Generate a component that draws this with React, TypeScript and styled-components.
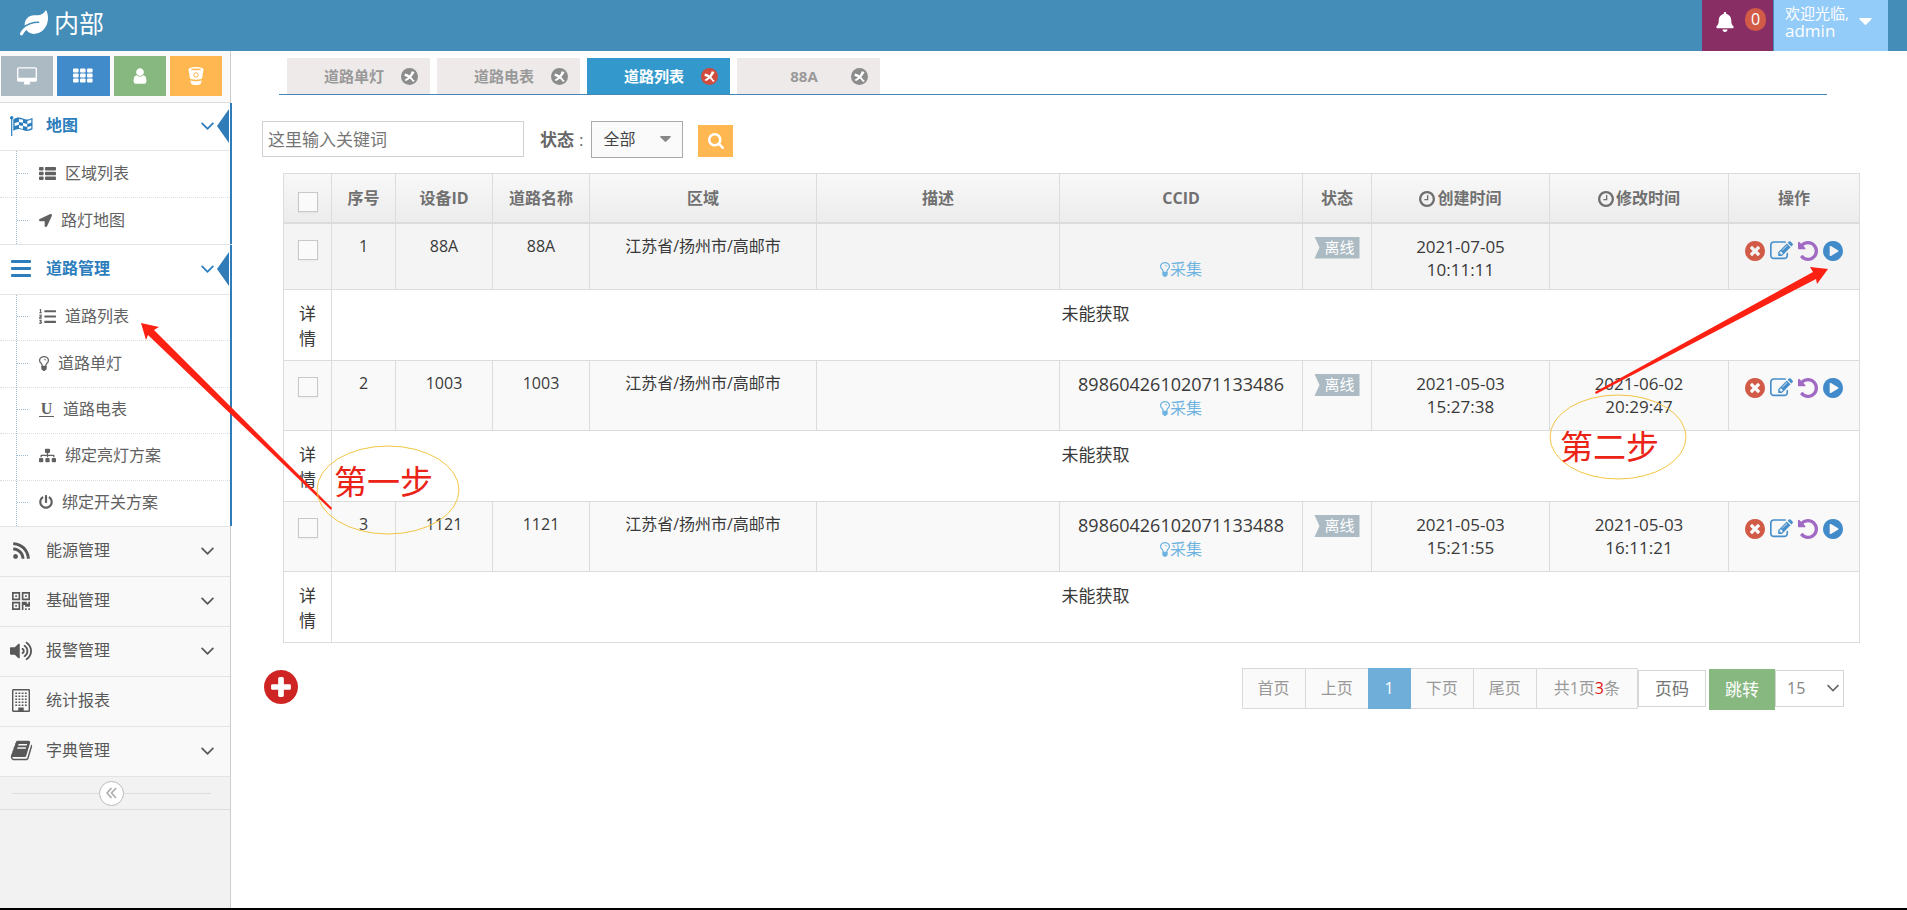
import React from "react";
import styled, { createGlobalStyle, css } from "styled-components";
import {
  FaLeaf,
  FaBell,
  FaLocationArrow,
  FaListOl,
  FaSitemap,
  FaPowerOff,
  FaRss,
  FaVolumeUp,
} from "react-icons/fa";

const GlobalStyle = createGlobalStyle`
  *, *::before, *::after { box-sizing: border-box; }
  body {
    margin: 0;
    background: #fff;
    color: #393939;
    font: 16px/23px "Open Sans", "Noto Sans CJK SC", sans-serif;
  }
  button, input, select { font: inherit; color: inherit; border-radius: 0; margin: 0; }
  button { border: 0; padding: 0; cursor: pointer; background: none; }
  a { color: inherit; text-decoration: none; }
  ul { list-style: none; margin: 0; padding: 0; }
  svg { display: block; flex: none; }
`;

/* ---------- icons ---------- */

type GlyphProps = { d: string; size: number; box?: string; width?: number };

const Glyph = ({ d, size, box = "0 0 1792 1792", width }: GlyphProps) => (
  <svg width={width ?? size} height={size} viewBox={box} fill="currentColor" aria-hidden="true">
    <path d={d} />
  </svg>
);

const RING =
  "q0 209-103 385.5t-279.5 279.5-385.5 103-385.5-103-279.5-279.5-103-385.5 103-385.5 279.5-279.5 385.5-103 385.5 103 279.5 279.5 103 385.5z";

const paths = {
  desktop:
    "M1792 992v-832q0-13-9.5-22.5t-22.5-9.5h-1600q-13 0-22.5 9.5t-9.5 22.5v832q0 13 9.5 22.5t22.5 9.5h1600q13 0 22.5-9.5t9.5-22.5zm128-832v1088q0 66-47 113t-113 47h-544q0 37 16 77.5t32 71 16 43.5q0 26-19 45t-45 19h-512q-26 0-45-19t-19-45q0-14 16-44t32-70 16-78h-544q-66 0-113-47t-47-113v-1088q0-66 47-113t113-47h1600q66 0 113 47t47 113z",
  user:
    "M1536 1399q0 109-62.5 187t-150.5 78h-854q-88 0-150.5-78t-62.5-187q0-85 8.5-160.5t31.5-152 58.5-131 94-89 134.5-34.5q131 128 313 128t313-128q76 0 134.5 34.5t94 89 58.5 131 31.5 152 8.5 160.5zm-256-887q0 159-112.5 271.5t-271.5 112.5-271.5-112.5-112.5-271.5 112.5-271.5 271.5-112.5 271.5 112.5 112.5 271.5z",
  angleDown:
    "M1395 736q0 13-10 23l-466 466q-10 10-23 10t-23-10l-466-466q-10-10-10-23t10-23l50-50q10-10 23-10t23 10l393 393 393-393q10-10 23-10t23 10l50 50q10 10 10 23z",
  caretDown:
    "M1408 704q0 26-19 45l-448 448q-19 19-45 19t-45-19l-448-448q-19-19-19-45t19-45 45-19h896q26 0 45 19t19 45z",
  timesCircle:
    "M1277 1122q0-26-19-45l-181-181 181-181q19-19 19-45 0-27-19-46l-90-90q-19-19-46-19-26 0-45 19l-181 181-181-181q-19-19-45-19-27 0-46 19l-90 90q-19 19-19 46 0 26 19 45l181 181-181 181q-19 19-19 45 0 27 19 46l90 90q19 19 46 19 26 0 45-19l181-181 181 181q19 19 45 19 27 0 46-19l90-90q19-19 19-46zm387-226" +
    RING,
  plusCircle:
    "M1344 960v-128q0-26-19-45t-45-19h-256v-256q0-26-19-45t-45-19h-128q-26 0-45 19t-19 45v256h-256q-26 0-45 19t-19 45v128q0 26 19 45t45 19h256v256q0 26 19 45t45 19h128q26 0 45-19t19-45v-256h256q26 0 45-19t19-45zm320-64" +
    RING,
  playCircle:
    "M896 128q209 0 385.5 103t279.5 279.5 103 385.5-103 385.5-279.5 279.5-385.5 103-385.5-103-279.5-279.5-103-385.5 103-385.5 279.5-279.5 385.5-103zm384 823q32-18 32-55t-32-55l-544-320q-31-19-64-1-32 19-32 56v640q0 37 32 56 16 8 32 8 17 0 32-9z",
  clock:
    "M1024 544v448q0 14-9 23t-23 9h-320q-14 0-23-9t-9-23v-64q0-14 9-23t23-9h224v-352q0-14 9-23t23-9h64q14 0 23 9t9 23zm416 352q0-148-73-273t-198-198-273-73-273 73-198 198-73 273 73 273 198 198 273 73 273-73 198-198 73-273zm224 0" +
    RING,
  bulb:
    "M1120 576q0 13-9.5 22.5t-22.5 9.5-22.5-9.5-9.5-22.5q0-46-54-71t-106-25q-13 0-22.5-9.5t-9.5-22.5 9.5-22.5 22.5-9.5q50 0 99.5 16t87 54 37.5 90zm160 0q0-72-34.5-134t-90-101.5-123-62-136.5-22.5-136.5 22.5-123 62-90 101.5-34.5 134q0 101 68 180 10 11 30.5 33t30.5 33q128 153 141 298h228q13-145 141-298 10-11 30.5-33t30.5-33q68-79 68-180zm128 0q0 155-103 268-45 49-74.5 87t-59.5 95.5-34 107.5q47 28 47 82 0 37-25 64 25 27 25 64 0 52-45 81 13 23 13 47 0 46-31.5 71t-77.5 25q-20 44-60 70t-87 26-87-26-60-70q-46 0-77.5-25t-31.5-71q0-24 13-47-45-29-45-81 0-37 25-64-25-27-25-64 0-54 47-82-4-50-34-107.5t-59.5-95.5-74.5-87q-103-113-103-268 0-99 44.5-184.5t117-142 164-89 186.5-32.5 186.5 32.5 164 89 117 142 44.5 184.5z",
  edit:
    "M888 1184l116-116-152-152-116 116v56h96v96h56zm440-720q-16-16-33 1l-350 350q-17 17-1 33t33-1l350-350q17-17 1-33zm80 594v190q0 119-84.5 203.5t-203.5 84.5h-832q-119 0-203.5-84.5t-84.5-203.5v-832q0-119 84.5-203.5t203.5-84.5h832q63 0 117 25 15 7 18 23 3 17-9 29l-49 49q-14 14-32 8-23-6-45-6h-832q-66 0-113 47t-47 113v832q0 66 47 113t113 47h832q66 0 113-47t47-113v-126q0-13 9-22l64-64q15-15 35-7t20 29zm-96-738l288 288-672 672h-288v-288zm444 132l-92 92-288-288 92-92q28-28 68-28t68 28l152 152q28 28 28 68t-28 68z",
  undo:
    "M1664 896q0 156-61 298t-164 245-245 164-298 61q-172 0-327-72.5t-264-204.5q-7-10-6.5-22.5t8.5-20.5l137-138q10-9 25-9 16 2 23 12 73 95 179 147t225 52q104 0 198.5-40.5t163.5-109.5 109.5-163.5 40.5-198.5-40.5-198.5-109.5-163.5-163.5-109.5-198.5-40.5q-98 0-188 35.5t-160 101.5l137 138q31 30 14 69-17 40-59 40h-448q-26 0-45-19t-19-45v-448q0-42 40-59 39-17 69 14l130 129q107-101 244.5-156.5t284.5-55.5q156 0 298 61t245 164 164 245 61 298z",
  search:
    "M1216 832q0-185-131.5-316.5t-316.5-131.5-316.5 131.5-131.5 316.5 131.5 316.5 316.5 131.5 316.5-131.5 131.5-316.5zm512 832q0 52-38 90t-90 38q-54 0-90-38l-343-342q-179 124-399 124-143 0-273.5-55.5t-225-150-150-225-55.5-273.5 55.5-273.5 150-225 225-150 273.5-55.5 273.5 55.5 225 150 150 225 55.5 273.5q0 220-124 399l343 343q37 37 37 90z",
  book:
    "M1703 478q40 57 18 129l-275 906q-19 64-76.5 107.5t-122.5 43.5h-923q-77 0-148.5-53.5t-99.5-131.5q-24-67-2-127 0-4 3-27t4-37q1-8-3-21.5t-3-19.5q2-11 8-21t16.5-23.5 16.5-23.5q23-38 45-91.5t30-91.5q3-10 .5-30t-.5-28q3-11 17-28t17-23q21-36 42-92t25-90q1-9-2.5-32t.5-28q4-13 22-30.5t22-22.5q19-26 42.5-84.5t27.5-96.5q1-8-3-25.5t-2-26.5q2-8 9-18t18-23 17-21q8-12 16.5-30.5t15-35 16-36 19.5-32 26.5-23.5 36-11.5 47.5 5.5l-1 3q38-9 51-9h761q74 0 114 56t18 130l-274 906q-36 119-71.5 153.5t-128.5 34.5h-869q-27 0-38 15-11 16-1 43 24 70 144 70h923q29 0 56-15.5t35-41.5l300-987q7-22 5-57 38 15 59 43zm-1064 2q-4 13 2 22.5t20 9.5h608q13 0 25.5-9.5t16.5-22.5l21-64q4-13-2-22.5t-20-9.5h-608q-13 0-25.5 9.5t-16.5 22.5zm-83 256q-4 13 2 22.5t20 9.5h608q13 0 25.5-9.5t16.5-22.5l21-64q4-13-2-22.5t-20-9.5h-608q-13 0-25.5 9.5t-16.5 22.5z",
};

const CIRCLE_BOX = "128 128 1536 1536";

const FlagIcon = () => (
  <svg width="23" height="20" viewBox="0 0 23 20" fill="currentColor" aria-hidden="true">
    <circle cx="1.700" cy="1.700" r="1.700" />
    <rect x="1.100" y="1" width="1.200" height="19" />
    <path d="M3.300 3.500C6.500 1.300 9.500 1 13 2.600s6 1.200 9.500-.8v11.400c-3.500 2-6 2.300-9.500.7s-6.500-1.200-9.700 1z" />
    <g fill="#fff">
      <path d="M9 3l4 .8v3L9 5.900zM17.300 4.900l4-1.400v3.200l-4 1.300z" />
      <path d="M4.600 7l4.300-1.300v3L4.600 10zM13 7l4.200.9v3L13 10.100z" />
      <path d="M9 9.200l4 .8v3l-4-.9zM17.300 11.200l4-1.400v2.500l-4 1.400z" />
    </g>
  </svg>
);

const QrIcon = () => (
  <svg width="18" height="18" viewBox="0 0 11 11" fill="currentColor" fillRule="evenodd" aria-hidden="true">
    <path d="M0 0h5v5H0zM1 1v3h3V1zM2 2h1v1H2zM6 0h5v5H6zM7 1v3h3V1zM8 2h1v1H8zM0 6h5v5H0zM1 7v3h3V7zM2 8h1v1H2z" />
    <path d="M6 6h3v1h1V6h1v3H8V8H7v3H6zM8 10h1v1H8zM10 10h1v1h-1z" />
  </svg>
);

const GridIcon = () => (
  <svg width="20" height="16" viewBox="0 0 20 16" fill="currentColor" aria-hidden="true">
    {[0, 5, 10].map((y) =>
      [0, 7, 14].map((x) => <rect key={`${x}-${y}`} x={x} y={y + 0.5} width="5.6" height="4" rx="1" />)
    )}
  </svg>
);

const BucketIcon = () => (
  <svg width="16" height="18" viewBox="0 0 16 18" aria-hidden="true">
    <path d="M.5 2.5C.5 1 4 0 8 0s7.500 1 7.500 2.500L14 11.500C13 13 3 13 2 11.500z" fill="#fff" />
    <path d="M2.400 13.200c3 1.300 8.200 1.300 11.200 0L13 16.500c-1.500 2-8.500 2-10 0z" fill="#fff" />
    <ellipse cx="8" cy="2.400" rx="5" ry=".8" fill="#ffb752" />
    <circle cx="8" cy="8" r="2.200" fill="none" stroke="#ffb752" strokeWidth="1" />
  </svg>
);

const BarsIcon = () => (
  <svg width="20" height="17" viewBox="0 0 20 17" fill="currentColor" aria-hidden="true">
    <rect width="20" height="3" rx="1" />
    <rect y="7" width="20" height="3" rx="1" />
    <rect y="14" width="20" height="3" rx="1" />
  </svg>
);

const ThListIcon = () => (
  <svg width="17" height="13" viewBox="0 0 17 13" fill="currentColor" aria-hidden="true">
    {[0, 4.7, 9.4].map((y) => (
      <g key={y}>
        <rect y={y} width="4.600" height="3.600" rx=".8" />
        <rect x="6" y={y} width="11" height="3.600" rx=".8" />
      </g>
    ))}
  </svg>
);

const BuildingIcon = () => (
  <svg width="18" height="23" viewBox="0 0 18 23" fill="currentColor" aria-hidden="true">
    <rect x=".7" y=".7" width="16.600" height="21.600" rx=".6" fill="none" stroke="currentColor" strokeWidth="1.400" />
    {[3.5, 6.5, 9.5, 12.5, 15.5].map((y) =>
      [3.3, 6.5, 9.7, 12.9].map((x) => <rect key={`${x}-${y}`} x={x} y={y} width="1.800" height="1.500" />)
    )}
    <rect x="6.300" y="18.500" width="5.400" height="4" />
  </svg>
);

const DoubleLeftIcon = () => (
  <svg width="11" height="12" viewBox="0 0 11 12" fill="none" stroke="#aaa" strokeWidth="1.600" aria-hidden="true">
    <path d="M5.500 1 1 6l4.500 5M10 1 5.500 6l4.500 5" />
  </svg>
);

const TabCloseIcon = () => (
  <svg width="17" height="17" viewBox="0 0 17 17" aria-hidden="true">
    <circle cx="8.500" cy="8.500" r="8.500" fill="currentColor" />
    <path
      d="M4 5.500C7.500 6.200 10.500 8.500 12.800 12.200L14 12.800 12 14C10 10.800 7 8.800 3.400 8z"
      fill="#fff"
    />
    <path d="M10.800 3.300 13.600 4C12 7.500 9.200 11 5.200 13L3.400 12C7 10 9.400 7 10.800 3.300z" fill="#fff" />
  </svg>
);

const UnderlineMark = styled.span`
  width: 15px;
  border-bottom: 1px solid #616161;
  font: 700 16px/14px "Liberation Serif", serif;
  text-align: center;
`;

/* ---------- frame ---------- */

const Page = styled.div`
  position: relative;
  display: flex;
  flex-direction: column;
  min-height: 100vh;
  border-bottom: 2px solid #000;
`;

const Header = styled.header`
  display: flex;
  align-items: stretch;
  height: 51px;
  padding: 0 19px 0 20px;
  background: #438db8;
  color: #fff;
`;

const Brand = styled.a`
  display: flex;
  align-items: center;
  gap: 6px;
  height: 45px;
  margin-right: auto;
  font-size: 25px;
  line-height: 32px;
`;

const NoticeButton = styled.button`
  display: flex;
  align-items: flex-start;
  gap: 10px;
  width: 71px;
  padding: 8px 7px 0 13px;
  background: #892e65;
  color: #fff;

  svg { margin-top: 4px; }
`;

const Badge = styled.span`
  width: 21px;
  height: 23px;
  border-radius: 11px;
  background: #d15b47;
  text-align: center;
  font-size: 16px;
  line-height: 22px;
`;

const UserButton = styled.button`
  display: flex;
  align-items: center;
  justify-content: space-between;
  width: 114px;
  margin-left: 1px;
  padding: 2px 16px 10px 11px;
  background: #93cbf9;
  color: #fff;
  font-size: 15px;
  line-height: 18px;
  text-align: left;
`;

const UserName = styled.span`
  display: block;
  font-size: 17px;
`;

const Body = styled.div`
  display: flex;
  flex: 1;
`;

/* ---------- sidebar ---------- */

const Sidebar = styled.nav`
  flex: none;
  width: 231px;
  background: #f2f2f2;
  border-right: 1px solid #ccc;
`;

const Shortcuts = styled.div`
  display: flex;
  gap: 4px;
  height: 52px;
  padding: 5px 8px 6px 1px;
  background: #fafafa;
  border-bottom: 1px solid #ddd;
`;

const Shortcut = styled.button<{ $tone: string }>`
  display: flex;
  flex: 1;
  align-items: center;
  justify-content: center;
  height: 40px;
  background: ${(p) => p.$tone};
  color: #fff;
`;

const Group = styled.li<{ $open?: boolean }>`
  position: relative;
  ${(p) =>
    p.$open &&
    css`
      &::after {
        content: "";
        position: absolute;
        top: 0;
        right: -2px;
        bottom: 1px;
        width: 2px;
        background: #2f7cb8;
      }
    `}
`;

const MenuRow = styled.a<{ $open?: boolean; $first?: boolean }>`
  position: relative;
  display: grid;
  grid-template-columns: 42px 1fr 18px;
  align-items: center;
  height: ${(p) => (p.$first ? 48 : 50)}px;
  padding: 0 11px 2px 0;
  border-bottom: 1px solid #e2e4e6;
  background: ${(p) => (p.$open ? "#fff" : "#f9f9f9")};
  color: ${(p) => (p.$open ? "#2b7dbc" : "#585858")};
  font-weight: ${(p) => (p.$open ? 700 : 400)};

  ${(p) =>
    p.$open &&
    css`
      &::after {
        content: "";
        position: absolute;
        right: 1px;
        top: 50%;
        margin-top: -18px;
        border: solid transparent;
        border-width: 17px 12px 17px 0;
        border-right-color: #2f7cb8;
      }
    `}
`;

const MenuIcon = styled.span`
  display: flex;
  justify-content: center;
`;

const MenuLabel = styled.span`
  padding-left: 4px;
`;

const SubMenu = styled.ul<{ $height: number }>`
  display: flex;
  flex-direction: column;
  height: ${(p) => p.$height}px;
  border-bottom: 1px solid #e2e4e6;
  background: #fff;
  background-image: linear-gradient(#9dbdd6 50%, transparent 50%);
  background-size: 1px 2px;
  background-position: 16px 0;
  background-repeat: repeat-y;
`;

const SubItem = styled.li`
  display: flex;
  flex: 1;
  border-bottom: 1px dotted #dcdcdc;

  &:last-child { border-bottom: 0; }
`;

const SubLink = styled.a`
  display: flex;
  flex: 1;
  align-items: center;
  gap: 9px;
  padding: 0 0 2px 17px;
  color: #616161;

  &::before {
    content: "";
    width: 11px;
    margin-right: 2px;
    border-top: 1px dotted #9dbdd6;
  }
`;

const CollapseBar = styled.div`
  display: flex;
  align-items: center;
  height: 33px;
  padding: 0 19px 0 12px;
  border-bottom: 1px solid #ddd;

  &::before, &::after {
    content: "";
    flex: 1;
    border-top: 1px solid #ddd;
  }
`;

const CollapseButton = styled.button`
  display: flex;
  align-items: center;
  justify-content: center;
  width: 25px;
  height: 25px;
  border: 1px solid #bbb;
  border-radius: 50%;
  background: #fff;
`;

/* ---------- main ---------- */

const Main = styled.main`
  flex: 1;
  min-width: 0;
  padding: 7px 47px 24px 31px;
`;

const Tabs = styled.div`
  display: flex;
  gap: 7px;
  margin: 0 33px 0 17px;
  padding-left: 8px;
  border-bottom: 1px solid #4487b4;
`;

const Tab = styled.div<{ $active?: boolean }>`
  display: flex;
  align-items: center;
  width: 143px;
  height: 36px;
  padding: 0 12px 0 20px;
  background: ${(p) => (p.$active ? "#3399cc" : "#eeeaea")};
  color: ${(p) => (p.$active ? "#fff" : "#999")};
  font-size: 15px;
  font-weight: 700;
`;

const TabName = styled.a`
  flex: 1;
  text-align: center;
`;

const TabClose = styled.button<{ $active?: boolean }>`
  color: ${(p) => (p.$active ? "#d04a3e" : "#8c8c8c")};
`;

const Filters = styled.form`
  display: flex;
  align-items: center;
  height: 38px;
  margin-top: 25px;
`;

const Keyword = styled.input`
  width: 262px;
  height: 36px;
  padding: 0 5px;
  border: 1px solid #d0d0d0;
  background: #fff;
  font-size: 17px;

  &::placeholder { color: #757575; opacity: 1; }
`;

const StatusLabel = styled.label`
  margin: 0 8px 0 16px;
  color: #666;
  font-size: 17px;

  b { margin-right: 5px; }
`;

const SelectBox = styled.span<{ $caret: number; $tone: string }>`
  position: relative;
  display: inline-flex;
  color: ${(p) => p.$tone};

  svg {
    position: absolute;
    right: ${(p) => p.$caret}px;
    top: 50%;
    transform: translateY(-50%);
    pointer-events: none;
  }
`;

const StatusSelect = styled.select`
  appearance: none;
  width: 92px;
  height: 37px;
  padding: 0 11px;
  border: 1px solid #aaa;
  background: #fafafa;
  color: #444;
  font-size: 16px;
`;

const SearchButton = styled.button`
  display: flex;
  align-items: center;
  justify-content: center;
  width: 35px;
  height: 32px;
  margin: 3px 0 0 15px;
  background: #ffb752;
  color: #fff;
`;

const Table = styled.table`
  width: calc(100% - 21px);
  margin: 15px 0 0 21px;
  border-collapse: collapse;
  table-layout: fixed;
  border: 1px solid #dcdcdc;

  th, td {
    padding: 11px 8px 0;
    border: 1px solid #dcdcdc;
    text-align: center;
    vertical-align: top;
  }
`;

const HeadRow = styled.tr`
  height: 49px;
  background: linear-gradient(#f8f8f8, #ececec);
  color: #707070;

  th { padding-top: 13px; border-bottom: 2px solid #dcdcdc; }
`;

const HeadLabel = styled.span`
  display: inline-flex;
  align-items: center;
  gap: 2px;
`;

const DataRow = styled.tr<{ $hover?: boolean }>`
  height: ${(p) => (p.$hover ? 67 : 70)}px;
  background: ${(p) => (p.$hover ? "#f4f4f4" : "#f9f9f9")};
`;

const DetailRow = styled.tr`
  height: 71px;
  font-size: 17px;
  line-height: 25px;
`;

const Check = styled.input`
  appearance: none;
  display: block;
  width: 20px;
  height: 20px;
  margin: 5px auto 0;
  border: 1px solid #c8c8c8;
  background: #fafafa;
  box-shadow: 0 1px 2px rgba(0, 0, 0, 0.05);
`;

const Ccid = styled.div`
  min-height: 23px;
  font-size: 18px;
  line-height: 25px;
`;

const Collect = styled.a`
  display: inline-flex;
  align-items: center;
  color: #6fb3e0;
`;

const Stamp = styled.span`
  display: block;
  font-size: 17px;
`;

const Offline = styled.span`
  display: inline-block;
  height: 22px;
  margin-top: 2px;
  padding: 0 5px 0 10px;
  background: #abbac3;
  clip-path: polygon(0 0, 100% 0, 100% 100%, 0 100%, 5px 50%);
  color: #fff;
  font-size: 15px;
  line-height: 20px;
  vertical-align: top;
`;

const Actions = styled.div`
  display: flex;
  justify-content: center;
  gap: 5px;
  padding-top: 6px;
`;

const ActionButton = styled.button<{ $tone: string }>`
  color: ${(p) => p.$tone};
`;

const Footer = styled.div`
  display: flex;
  align-items: flex-start;
  justify-content: space-between;
  margin-top: 25px;
  padding: 0 16px 0 2px;
`;

const AddButton = styled.button`
  margin-top: 2px;
  color: #cf2424;
`;

const Pager = styled.div`
  display: flex;
  align-items: flex-start;
`;

const pagerCell = css`
  height: 41px;
  padding: 0 15px;
  border: 1px solid #d9d9d9;
  margin-right: -1px;
  background: #fafafa;
  color: #999;
  line-height: 39px;
  font-size: 16px;
`;

const PageButton = styled.button<{ $current?: boolean }>`
  ${pagerCell}
  ${(p) =>
    p.$current &&
    css`
      position: relative;
      width: 43px;
      border-color: #6faed9;
      background: #6faed9;
      color: #fff;
    `}
`;

const Total = styled.span`
  ${pagerCell}
  margin-right: 0;
  padding: 0 17px;

  em { font-style: normal; color: #e01010; }
`;

const PageInput = styled.input`
  width: 68px;
  height: 37px;
  margin-top: 2px;
  padding: 0 16px;
  border: 1px solid #d5d5d5;
  font-size: 17px;

  &::placeholder { color: #757575; opacity: 1; }
`;

const JumpButton = styled.button`
  width: 66px;
  height: 41px;
  margin: 1px 0 0 3px;
  background: #87b87f;
  color: #fff;
  font-size: 17px;
`;

const SizeSelect = styled.select`
  appearance: none;
  width: 69px;
  height: 37px;
  margin-top: 2px;
  padding: 0 11px;
  border: 1px solid #d5d5d5;
  background: #fff;
  color: #858585;
  font-size: 16px;
`;

const Notes = styled.svg`
  position: absolute;
  top: 0;
  left: 0;
  overflow: visible;
  pointer-events: none;

  polygon { fill: #fc2113; }
  ellipse { fill: none; stroke: #f3c544; stroke-width: 1; }
  text { fill: #ea2316; font-size: 33px; }
`;

/* ---------- data ---------- */

const openMenus = [
  {
    name: "地图",
    icon: <FlagIcon />,
    height: 94,
    items: [
      { name: "区域列表", icon: <ThListIcon /> },
      { name: "路灯地图", icon: <FaLocationArrow size={13} /> },
    ],
  },
  {
    name: "道路管理",
    icon: <BarsIcon />,
    height: 232,
    items: [
      { name: "道路列表", icon: <FaListOl size={17} /> },
      { name: "道路单灯", icon: <Glyph d={paths.bulb} size={15} width={10} box="384 128 1024 1536" /> },
      { name: "道路电表", icon: <UnderlineMark aria-hidden="true">U</UnderlineMark> },
      { name: "绑定亮灯方案", icon: <FaSitemap size={17} /> },
      { name: "绑定开关方案", icon: <FaPowerOff size={14} /> },
    ],
  },
];

const closedMenus = [
  { name: "能源管理", icon: <FaRss size={19} />, more: true },
  { name: "基础管理", icon: <QrIcon />, more: true },
  { name: "报警管理", icon: <FaVolumeUp size={22} />, more: true },
  { name: "统计报表", icon: <BuildingIcon />, more: false },
  { name: "字典管理", icon: <Glyph d={paths.book} size={23} />, more: true },
];

const tabs = ["道路单灯", "道路电表", "道路列表", "88A"];
const columnWidths = [48, 64, 97, 97, 227, 243, 243, 69, 178, 179, 131];
const headings = ["序号", "设备ID", "道路名称", "区域", "描述", "CCID", "状态", "创建时间", "修改时间", "操作"];

const rows = [
  { no: 1, id: "88A", ccid: "", created: ["2021-07-05", "10:11:11"], updated: [] },
  { no: 2, id: "1003", ccid: "89860426102071133486", created: ["2021-05-03", "15:27:38"], updated: ["2021-06-02", "20:29:47"] },
  { no: 3, id: "1121", ccid: "89860426102071133488", created: ["2021-05-03", "15:21:55"], updated: ["2021-05-03", "16:11:21"] },
];

const AngleDown = () => <Glyph d={paths.angleDown} width={13} size={8} box="387 630 1018 610" />;

export default function App() {
  return (
    <Page>
      <GlobalStyle />
      <Header>
        <Brand href="#">
          <FaLeaf size={28} />
          内部
        </Brand>
        <NoticeButton aria-label="通知">
          <FaBell size={20} />
          <Badge>0</Badge>
        </NoticeButton>
        <UserButton>
          <span>
            欢迎光临,
            <UserName>admin</UserName>
          </span>
          <Glyph d={paths.caretDown} width={13} size={7} box="384 640 1024 576" />
        </UserButton>
      </Header>

      <Body>
        <Sidebar>
          <Shortcuts>
            <Shortcut $tone="#abbac3" aria-label="桌面">
              <Glyph d={paths.desktop} size={19} width={20} box="0 0 1920 1792" />
            </Shortcut>
            <Shortcut $tone="#428bca" aria-label="表格">
              <GridIcon />
            </Shortcut>
            <Shortcut $tone="#87b87f" aria-label="用户">
              <Glyph d={paths.user} size={18} />
            </Shortcut>
            <Shortcut $tone="#ffb752" aria-label="存储">
              <BucketIcon />
            </Shortcut>
          </Shortcuts>
          <ul>
            {openMenus.map((menu, i) => (
              <Group key={menu.name} $open>
                <MenuRow href="#" $open $first={i === 0}>
                  <MenuIcon>{menu.icon}</MenuIcon>
                  <MenuLabel>{menu.name}</MenuLabel>
                  <AngleDown />
                </MenuRow>
                <SubMenu $height={menu.height}>
                  {menu.items.map((item) => (
                    <SubItem key={item.name}>
                      <SubLink href="#">
                        {item.icon}
                        {item.name}
                      </SubLink>
                    </SubItem>
                  ))}
                </SubMenu>
              </Group>
            ))}
            {closedMenus.map((menu) => (
              <Group key={menu.name}>
                <MenuRow href="#">
                  <MenuIcon>{menu.icon}</MenuIcon>
                  <MenuLabel>{menu.name}</MenuLabel>
                  {menu.more && <AngleDown />}
                </MenuRow>
              </Group>
            ))}
          </ul>
          <CollapseBar>
            <CollapseButton aria-label="收起">
              <DoubleLeftIcon />
            </CollapseButton>
          </CollapseBar>
        </Sidebar>

        <Main>
          <Tabs>
            {tabs.map((name) => {
              const active = name === "道路列表";
              return (
                <Tab key={name} $active={active}>
                  <TabName href="#">{name}</TabName>
                  <TabClose $active={active} aria-label={`关闭${name}`}>
                    <TabCloseIcon />
                  </TabClose>
                </Tab>
              );
            })}
          </Tabs>

          <Filters onSubmit={(e) => e.preventDefault()}>
            <Keyword placeholder="这里输入关键词" aria-label="关键词" />
            <StatusLabel htmlFor="status">
              <b>状态</b>:
            </StatusLabel>
            <SelectBox $caret={12} $tone="#888">
              <StatusSelect id="status">
                <option>全部</option>
              </StatusSelect>
              <Glyph d={paths.caretDown} width={11} size={6} box="384 640 1024 576" />
            </SelectBox>
            <SearchButton aria-label="搜索">
              <Glyph d={paths.search} size={16} box="64 128 1664 1664" />
            </SearchButton>
          </Filters>

          <Table>
            <colgroup>
              {columnWidths.map((w, i) => (
                <col key={i} width={w} />
              ))}
            </colgroup>
            <thead>
              <HeadRow>
                <th>
                  <Check type="checkbox" aria-label="全选" />
                </th>
                {headings.map((h) => (
                  <th key={h}>
                    <HeadLabel>
                      {h.endsWith("时间") && <Glyph d={paths.clock} size={16} box={CIRCLE_BOX} />}
                      {h}
                    </HeadLabel>
                  </th>
                ))}
              </HeadRow>
            </thead>
            <tbody>
              {rows.map((row) => (
                <React.Fragment key={row.no}>
                  <DataRow $hover={row.no === 1}>
                    <td>
                      <Check type="checkbox" aria-label={`选择${row.id}`} />
                    </td>
                    <td>{row.no}</td>
                    <td>{row.id}</td>
                    <td>{row.id}</td>
                    <td>江苏省/扬州市/高邮市</td>
                    <td />
                    <td>
                      <Ccid>{row.ccid}</Ccid>
                      <Collect href="#">
                        <Glyph d={paths.bulb} size={15} width={10} box="384 128 1024 1536" />
                        采集
                      </Collect>
                    </td>
                    <td>
                      <Offline>离线</Offline>
                    </td>
                    <td>
                      {row.created.map((t) => (
                        <Stamp key={t}>{t}</Stamp>
                      ))}
                    </td>
                    <td>
                      {row.updated.map((t) => (
                        <Stamp key={t}>{t}</Stamp>
                      ))}
                    </td>
                    <td>
                      <Actions>
                        <ActionButton $tone="#d15b47" aria-label="删除">
                          <Glyph d={paths.timesCircle} size={20} box={CIRCLE_BOX} />
                        </ActionButton>
                        <ActionButton $tone="#478fca" aria-label="编辑">
                          <Glyph d={paths.edit} width={23} size={20} box="0 128 1792 1536" />
                        </ActionButton>
                        <ActionButton $tone="#a069c3" aria-label="还原">
                          <Glyph d={paths.undo} size={20} box={CIRCLE_BOX} />
                        </ActionButton>
                        <ActionButton $tone="#428bca" aria-label="执行">
                          <Glyph d={paths.playCircle} size={20} box={CIRCLE_BOX} />
                        </ActionButton>
                      </Actions>
                    </td>
                  </DataRow>
                  <DetailRow>
                    <td>详情</td>
                    <td colSpan={10}>未能获取</td>
                  </DetailRow>
                </React.Fragment>
              ))}
            </tbody>
          </Table>

          <Footer>
            <AddButton aria-label="添加">
              <Glyph d={paths.plusCircle} size={34} box={CIRCLE_BOX} />
            </AddButton>
            <Pager>
              <PageButton>首页</PageButton>
              <PageButton>上页</PageButton>
              <PageButton $current>1</PageButton>
              <PageButton>下页</PageButton>
              <PageButton>尾页</PageButton>
              <Total>
                共1页<em>3</em>条
              </Total>
              <PageInput placeholder="页码" aria-label="页码" />
              <JumpButton>跳转</JumpButton>
              <SelectBox $caret={5} $tone="#666">
                <SizeSelect aria-label="每页条数">
                  <option>15</option>
                </SizeSelect>
                <Glyph d={paths.angleDown} width={12} size={8} box="387 630 1018 610" />
              </SelectBox>
            </Pager>
          </Footer>
        </Main>
      </Body>

      <Notes width="1" height="1">
        <polygon points="141,323 159,327 154,330 332,508 331,510 148,335 146,340" />
        <ellipse cx="388" cy="490" rx="71" ry="44" />
        <text x="334" y="494">第一步</text>
        <polygon points="1828,269 1810,267 1813,272 1595,392 1596,394 1816,279 1817,284" />
        <ellipse cx="1618" cy="437" rx="68" ry="42" />
        <text x="1560" y="459">第二步</text>
      </Notes>
    </Page>
  );
}
